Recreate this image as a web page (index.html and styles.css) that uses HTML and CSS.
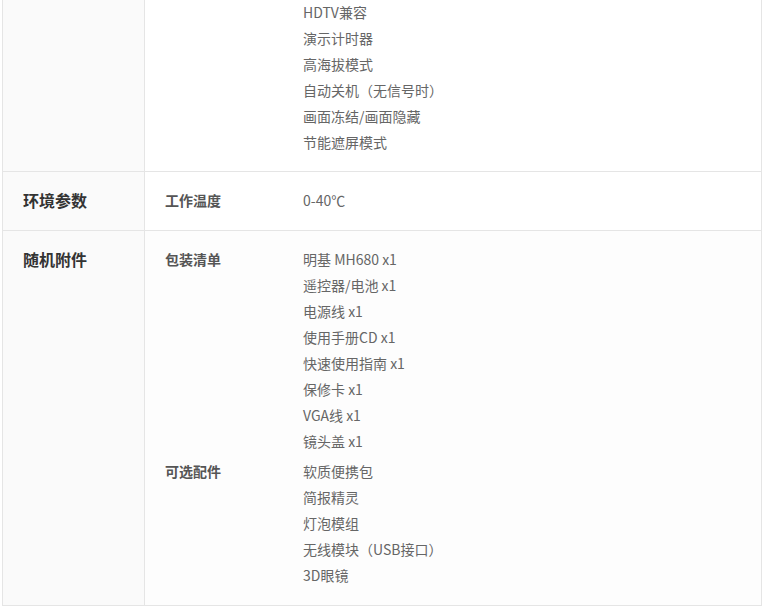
FILE: index.html
```html
<!DOCTYPE html>
<html lang="zh-CN">
<head>
    <meta charset="UTF-8">
    <title>明基 MH680 规格参数</title>
    <link rel="stylesheet" href="styles.css">
</head>
<body>
    <div class="spec">
        <div class="spec-row first">
            <div class="spec-title"></div>
            <div class="spec-body">
                <div class="group">
                    <div class="group-name"></div>
                    <ul class="values">
                        <li>HDTV兼容</li>
                        <li>演示计时器</li>
                        <li>高海拔模式</li>
                        <li>自动关机（无信号时）</li>
                        <li>画面冻结/画面隐藏</li>
                        <li>节能遮屏模式</li>
                    </ul>
                </div>
            </div>
        </div>
        <div class="spec-row">
            <div class="spec-title">环境参数</div>
            <div class="spec-body">
                <div class="group">
                    <div class="group-name">工作温度</div>
                    <ul class="values">
                        <li>0-40℃</li>
                    </ul>
                </div>
            </div>
        </div>
        <div class="spec-row last">
            <div class="spec-title">随机附件</div>
            <div class="spec-body">
                <div class="group">
                    <div class="group-name">包装清单</div>
                    <ul class="values">
                        <li>明基 MH680 x1</li>
                        <li>遥控器/电池 x1</li>
                        <li>电源线 x1</li>
                        <li>使用手册CD x1</li>
                        <li>快速使用指南 x1</li>
                        <li>保修卡 x1</li>
                        <li>VGA线 x1</li>
                        <li>镜头盖 x1</li>
                    </ul>
                </div>
                <div class="group">
                    <div class="group-name">可选配件</div>
                    <ul class="values">
                        <li>软质便携包</li>
                        <li>简报精灵</li>
                        <li>灯泡模组</li>
                        <li>无线模块（USB接口）</li>
                        <li>3D眼镜</li>
                    </ul>
                </div>
            </div>
        </div>
    </div>
</body>
</html>
```

FILE: styles.css
```css
body {
    margin: 0;
    background: #fff;
    font-family: "Noto Sans CJK SC", "Liberation Sans", sans-serif;
    font-size: 14px;
    color: #666;
}
.spec {
    margin-left: 2px;
    width: 760px;
    border-left: 1px solid #e5e5e5;
    border-right: 1px solid #e5e5e5;
    box-sizing: border-box;
}
.spec-row {
    display: grid;
    grid-template-columns: 142px 1fr;
    border-bottom: 1px solid #e5e5e5;
}
.spec-title {
    background: #fafafa;
    border-right: 1px solid #e5e5e5;
    padding: 15px 0 17px 20px;
    font-size: 16px;
    font-weight: bold;
    line-height: 26px;
    color: #333;
}
.spec-body {
    padding: 15px 0 17px 20px;
}
.first .spec-title {
    padding: 0;
}
.first .spec-body {
    padding-top: 0;
    padding-bottom: 16px;
    margin-top: -1px;
}
.group {
    display: grid;
    grid-template-columns: 138px 1fr;
}
.group + .group {
    margin-top: 4px;
}
.group-name {
    line-height: 26px;
    font-weight: bold;
    color: #555;
}
.values {
    list-style: none;
    margin: 0;
    padding: 0;
    line-height: 26px;
}
.last .spec-body {
    background: #fdfdfd;
}
```
